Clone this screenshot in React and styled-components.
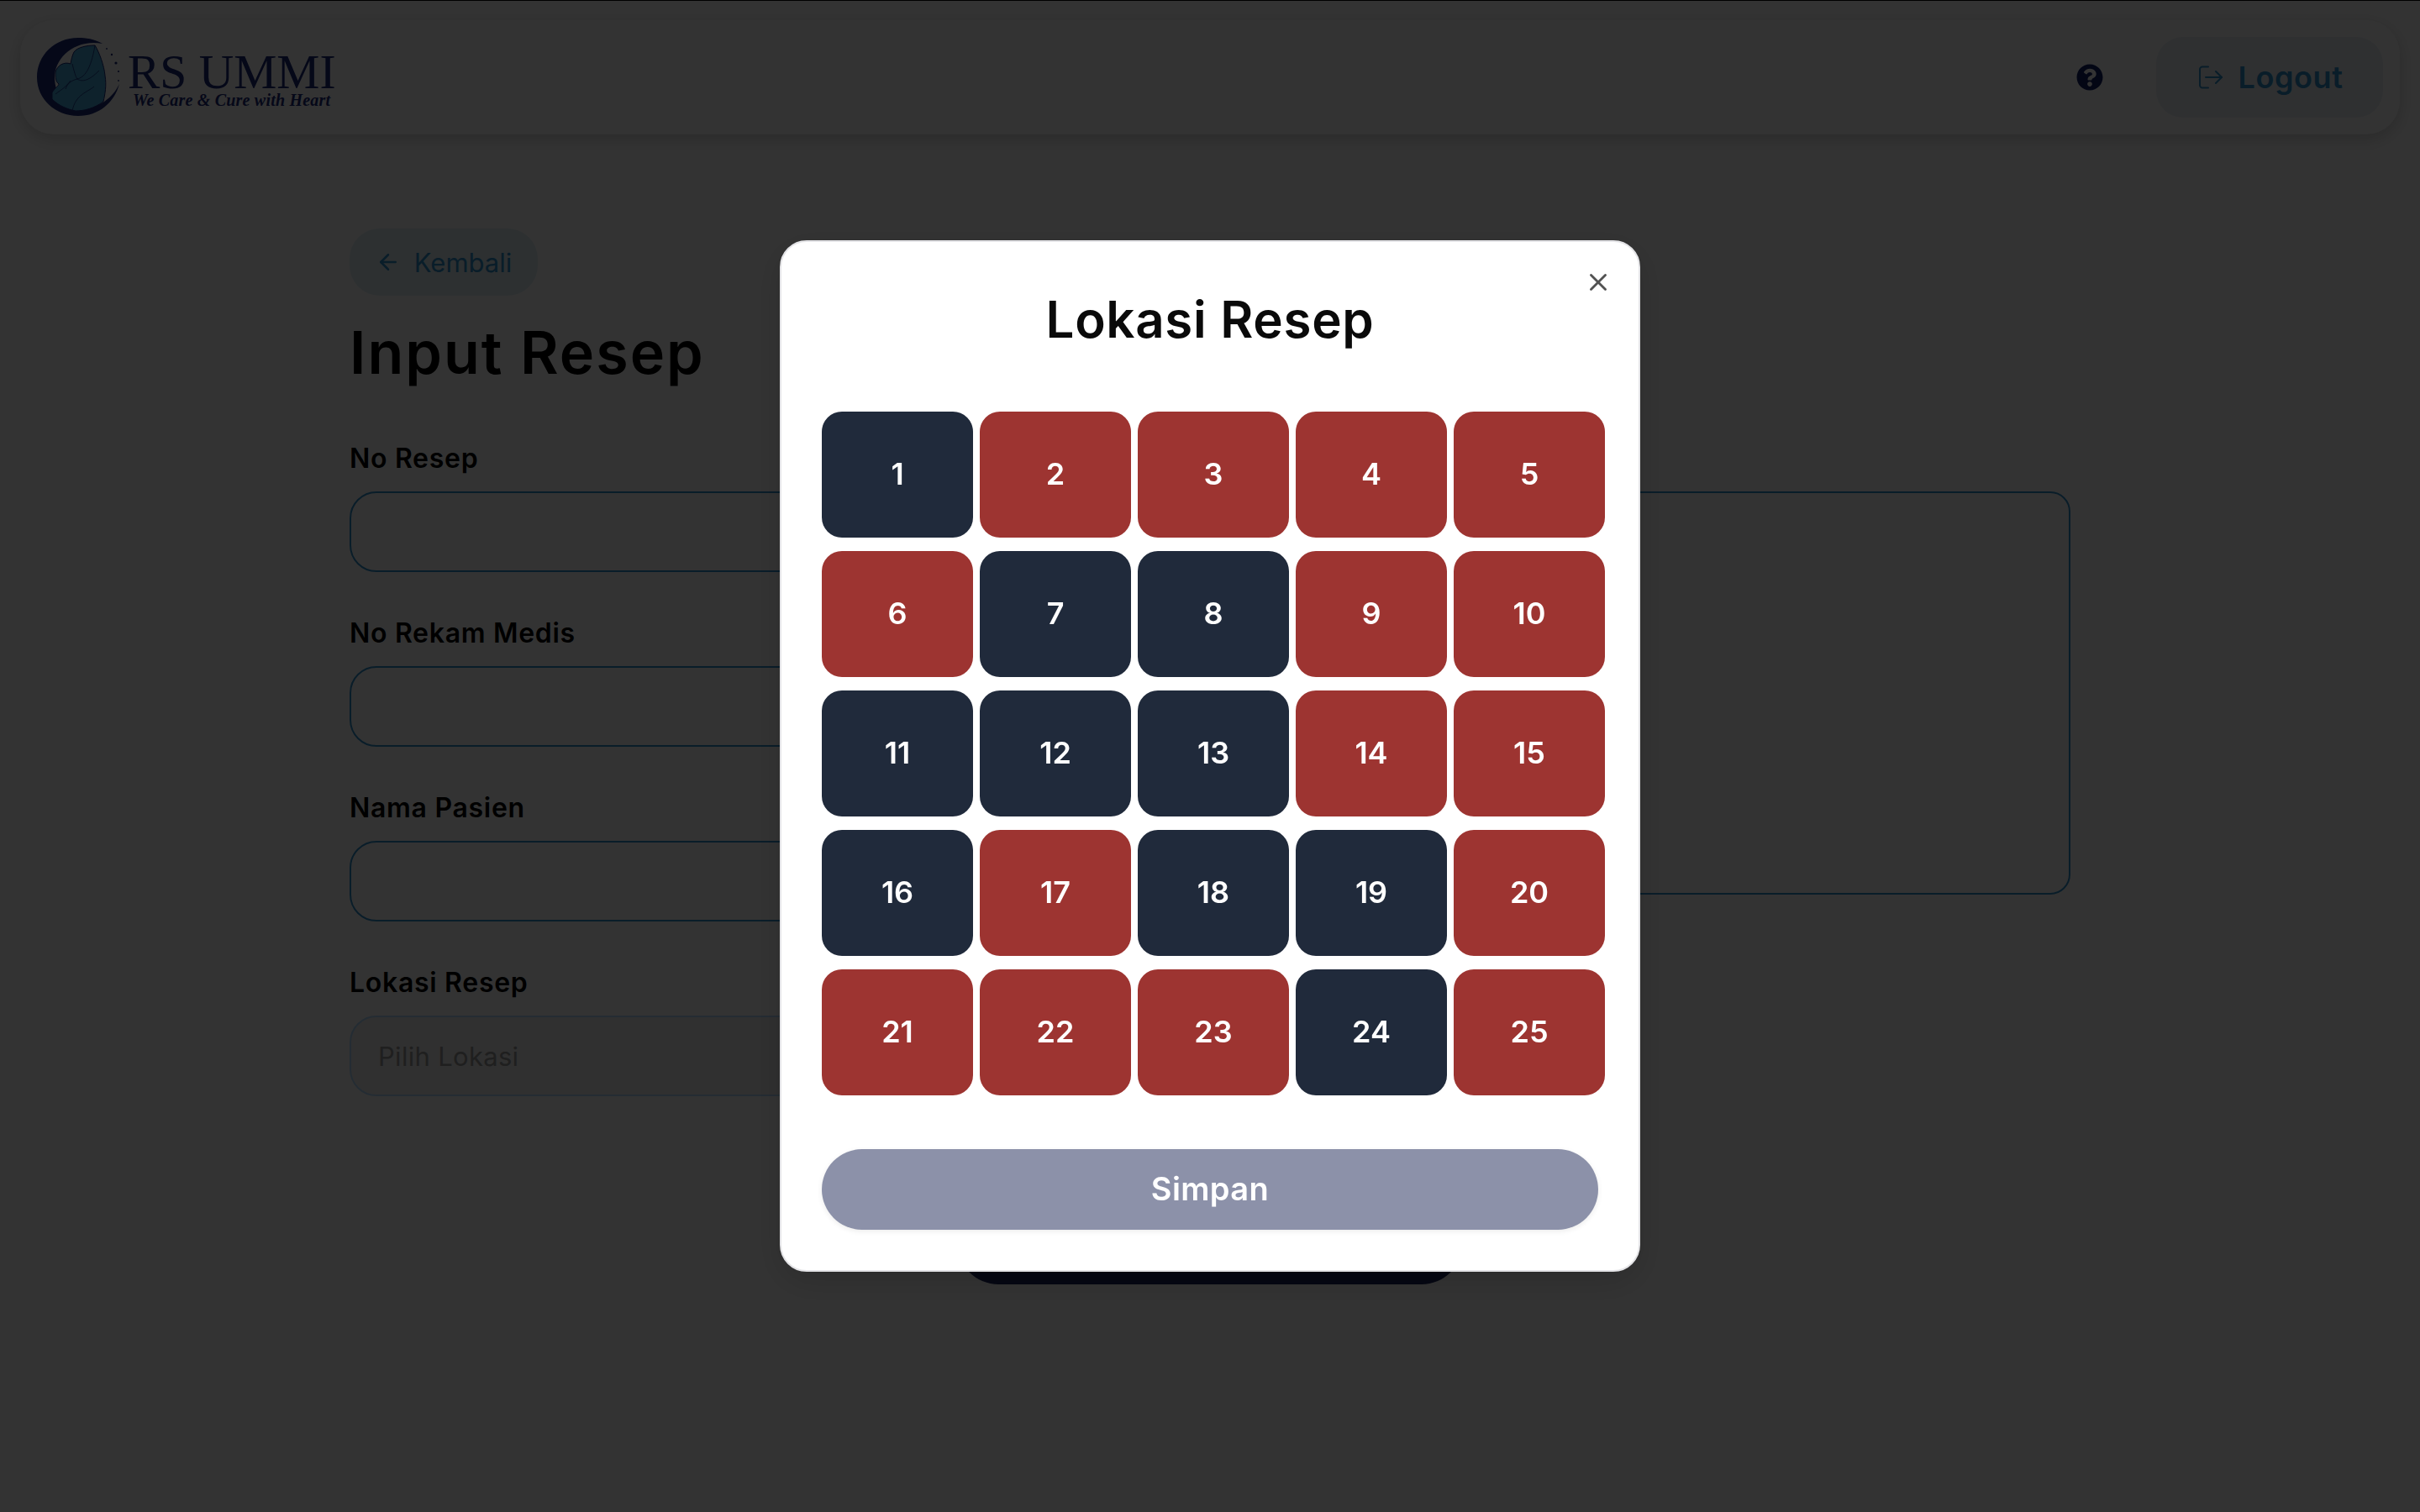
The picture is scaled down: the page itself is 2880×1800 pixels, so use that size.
import React from 'react';
import styled, { createGlobalStyle } from 'styled-components';
import { ArrowLeft, X } from 'lucide-react';
import { FaQuestionCircle } from 'react-icons/fa';

const GlobalStyle = createGlobalStyle`
  * {
    box-sizing: border-box;
  }
  html, body {
    margin: 0;
    padding: 0;
    background: #fff;
  }
  body {
    font-family: Inter, "Noto Sans", sans-serif;
  }
`;

const Page = styled.div`
  width: 2880px;
  height: 1800px;
  padding-top: 24px;
  overflow: hidden;
`;

const Nav = styled.header`
  height: 136px;
  margin: 0 24px;
  padding: 0 20px 0 16px;
  display: flex;
  align-items: center;
  justify-content: space-between;
  background: #fff;
  border-radius: 40px;
  box-shadow: 0 6px 20px rgba(0, 0, 0, 0.18);
`;

const Logo = styled.div`
  display: flex;
  align-items: center;
`;

const LogoText = styled.div`
  display: flex;
  flex-direction: column;
  margin-left: 2px;
  padding-top: 8px;
  color: #19287a;
`;

const LogoName = styled.span`
  font-family: "Liberation Serif", serif;
  font-size: 57.5px;
  line-height: 46px;
  white-space: nowrap;
`;

const LogoTag = styled.span`
  font-family: "Liberation Serif", serif;
  font-style: italic;
  font-weight: 700;
  font-size: 20px;
  line-height: 20px;
  margin-left: 6px;
  letter-spacing: 0.2px;
  white-space: nowrap;
`;

const NavRight = styled.div`
  display: flex;
  align-items: center;
  gap: 63px;
`;

const HelpIcon = styled(FaQuestionCircle)`
  width: 32px;
  height: 32px;
  color: #0f1e64;
`;

const LogoutButton = styled.button`
  width: 270px;
  height: 96px;
  padding: 0 0 0 4px;
  display: flex;
  align-items: center;
  justify-content: center;
  gap: 18px;
  border: 0;
  border-radius: 32px;
  background: #e8f0f5;
  color: #2f8fcc;
  font-family: inherit;
  font-size: 36px;
  font-weight: 600;
  letter-spacing: 0.6px;
`;

const Main = styled.main`
  width: 2048px;
  margin: 112px auto 0;
`;

const BackButton = styled.button`
  width: 224px;
  height: 80px;
  display: flex;
  align-items: center;
  justify-content: center;
  gap: 16px;
  border: 0;
  border-radius: 36px;
  background: #e0f0f6;
  color: #2f8fcc;
  font-family: inherit;
  font-size: 31px;
  font-weight: 400;
`;

const Heading = styled.h1`
  margin: 20px 0 53px;
  height: 96px;
  line-height: 96px;
  font-size: 70px;
  font-weight: 600;
  letter-spacing: 2px;
  color: #000;
`;

const FormGrid = styled.form`
  display: grid;
  grid-template-columns: 1fr 1fr;
  column-gap: 64px;
`;

const Column = styled.div`
  display: flex;
  flex-direction: column;
  gap: 48px;
`;

const Field = styled.div`
  display: flex;
  flex-direction: column;
  gap: 16px;
`;

const Label = styled.label`
  height: 48px;
  line-height: 50px;
  font-size: 32px;
  font-weight: 600;
  letter-spacing: 0.7px;
  color: #000;
`;

const Input = styled.input`
  height: 96px;
  padding: 0 32px;
  border: 2px solid ${(p) => (p.disabled ? '#b4dcff' : '#2f8fcc')};
  border-radius: 32px;
  background: ${(p) => (p.disabled ? '#f0f0f0' : '#fff')};
  font-family: inherit;
  font-size: 31px;
  letter-spacing: 0.3px;

  &::placeholder {
    color: #999;
    opacity: 1;
  }
`;

const TextArea = styled.textarea`
  height: 480px;
  border: 2px solid #2f8fcc;
  border-radius: 24px;
  background: #fff;
  resize: none;
`;

const SubmitRow = styled.div`
  display: flex;
  justify-content: center;
  margin-top: 128px;
`;

const SubmitButton = styled.button`
  width: 600px;
  height: 96px;
  border: 0;
  border-radius: 48px;
  background: #19235a;
  color: #fff;
  font-family: inherit;
  font-size: 36px;
  font-weight: 600;
`;

const Overlay = styled.div`
  position: fixed;
  inset: 0;
  display: flex;
  align-items: center;
  justify-content: center;
  background: rgba(0, 0, 0, 0.8);
  box-shadow: inset 0 1px 0 #000;
`;

const Modal = styled.div`
  position: relative;
  width: 1024px;
  height: 1228px;
  padding: 52px 48px 48px;
  background: #fff;
  border: 2px solid #e4e4e7;
  border-radius: 32px;
  box-shadow: 0 12px 40px rgba(0, 0, 0, 0.15);
`;

const CloseButton = styled.button`
  position: absolute;
  top: 30px;
  right: 30px;
  width: 36px;
  height: 36px;
  padding: 0;
  border: 0;
  background: none;
  color: #0a0a0a;
  opacity: 0.7;
  display: flex;
  align-items: center;
  justify-content: center;
`;

const ModalTitle = styled.h2`
  margin: 0 0 70px;
  height: 80px;
  line-height: 80px;
  text-align: center;
  font-size: 60px;
  font-weight: 600;
  letter-spacing: 0.7px;
  color: #0a0a0a;
`;

const TileGrid = styled.div`
  display: grid;
  grid-template-columns: repeat(5, 180px);
  grid-auto-rows: 150px;
  gap: 16px 8px;
`;

const Tile = styled.button`
  padding: 0 0 2px;
  border: 0;
  border-radius: 24px;
  background: ${(p) => (p.$taken ? '#9d3431' : '#202a3b')};
  color: #fff;
  font-family: inherit;
  font-size: 36px;
  font-weight: 600;
`;

const SaveButton = styled.button`
  display: block;
  width: 924px;
  height: 96px;
  margin-top: 64px;
  padding: 0 0 2px;
  border: 0;
  border-radius: 48px;
  background: #8c91a9;
  color: #fff;
  font-family: inherit;
  font-size: 38px;
  font-weight: 600;
  letter-spacing: 0.4px;
  box-shadow: 0 2px 6px rgba(0, 0, 0, 0.08);
`;

const taken = [2, 3, 4, 5, 6, 9, 10, 14, 15, 17, 20, 21, 22, 23, 25];
const tiles = Array.from({ length: 25 }, (_, i) => i + 1);

const LogoMark = () => (
  <svg width="110" height="104" viewBox="40 40 110 104">
    <path
      d="M122 52C112 46 102 45 93 45C65 45 44 66 44 92C44 118 66 138 93 138C118 138 136 122 142 100C134 117 118 128 98 130C78 130 65 112 65 92C65 70 88 46 122 52Z"
      fill="#19287a"
    />
    <path
      d="M88 62C92 56 104 54 113 54C118 62 124 78 125 90C127 102 125 112 123 121C112 129 100 132 90 132C80 130 70 126 62 118L62 110C66 104 70 102 70 100C66 97 66 92 66 86C68 78 76 73 84 76C85 70 86 66 88 62Z"
      fill="#46aadc"
      stroke="#19287a"
      strokeWidth="1"
    />
    <g fill="none" stroke="#19287a" strokeWidth="0.8">
      <path d="M86 76C88 84 90 92 92 94C100 92 108 84 113 54" />
      <path d="M92 94C98 98 106 96 118 84" />
      <path d="M84 96C78 104 74 106 66 112" />
      <path d="M112 103C104 110 90 112 86 132" />
      <path d="M92 94C84 96 80 100 78 106" />
    </g>
    <g fill="#19287a">
      <circle cx="127" cy="58" r="0.9" />
      <circle cx="133" cy="65" r="1.2" />
      <circle cx="138" cy="75" r="1.6" />
      <circle cx="141" cy="85" r="1.1" />
      <circle cx="141" cy="96" r="0.9" />
    </g>
  </svg>
);

const LogoutIcon = () => (
  <svg width="28" height="28" viewBox="0 0 28 28" fill="none" stroke="currentColor" strokeWidth="2" strokeLinecap="round" strokeLinejoin="round">
    <path d="M11 1.5H4a3 3 0 0 0-3 3v19a3 3 0 0 0 3 3h7" />
    <path d="M8 14h19" />
    <path d="M20 7l7 7-7 7" />
  </svg>
);

const TextField = ({ label, placeholder, disabled }) => (
  <Field>
    <Label>{label}</Label>
    <Input placeholder={placeholder} disabled={disabled} />
  </Field>
);

export default function App() {
  return (
    <>
      <GlobalStyle />
      <Page>
        <Nav>
          <Logo>
            <LogoMark />
            <LogoText>
              <LogoName>RS UMMI</LogoName>
              <LogoTag>We Care &amp; Cure with Heart</LogoTag>
            </LogoText>
          </Logo>
          <NavRight>
            <HelpIcon />
            <LogoutButton>
              <LogoutIcon />
              Logout
            </LogoutButton>
          </NavRight>
        </Nav>
        <Main>
          <BackButton>
            <ArrowLeft size={30} strokeWidth={2} />
            Kembali
          </BackButton>
          <Heading>Input Resep</Heading>
          <FormGrid>
            <Column>
              <TextField label="No Resep" />
              <TextField label="No Rekam Medis" />
              <TextField label="Nama Pasien" />
              <TextField label="Lokasi Resep" placeholder="Pilih Lokasi" disabled />
            </Column>
            <Column>
              <Field>
                <Label>Catatan</Label>
                <TextArea />
              </Field>
            </Column>
          </FormGrid>
          <SubmitRow>
            <SubmitButton>Simpan</SubmitButton>
          </SubmitRow>
        </Main>
      </Page>
      <Overlay>
        <Modal>
          <CloseButton>
            <X size={34} strokeWidth={2} />
          </CloseButton>
          <ModalTitle>Lokasi Resep</ModalTitle>
          <TileGrid>
            {tiles.map((n) => (
              <Tile key={n} $taken={taken.includes(n)}>{n}</Tile>
            ))}
          </TileGrid>
          <SaveButton>Simpan</SaveButton>
        </Modal>
      </Overlay>
    </>
  );
}
